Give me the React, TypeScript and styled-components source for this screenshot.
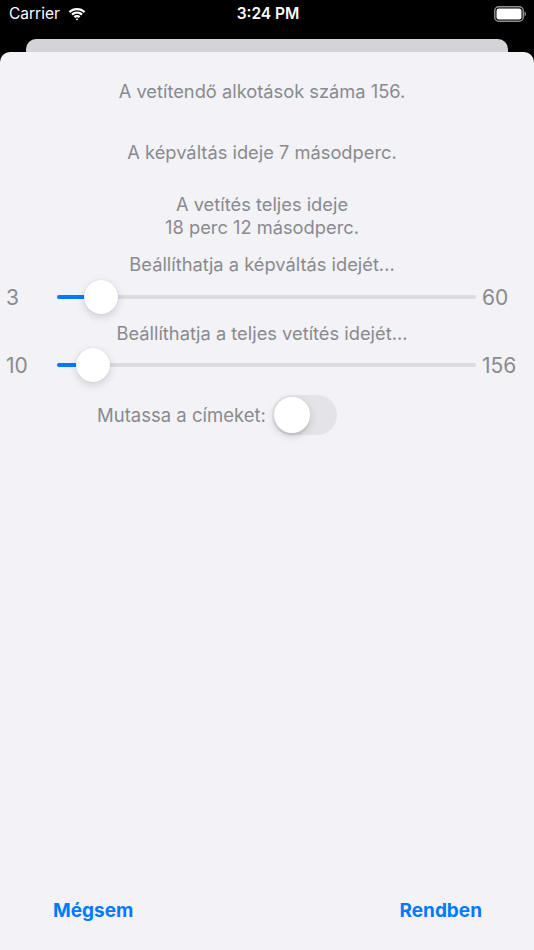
import React from "react";
import styled, { createGlobalStyle } from "styled-components";

const GlobalStyle = createGlobalStyle`
  html, body {
    margin: 0;
    padding: 0;
    background: #000000;
  }
  * {
    box-sizing: border-box;
  }
`;

const Screen = styled.div`
  width: 534px;
  height: 950px;
  display: flex;
  flex-direction: column;
  background: #000000;
  font-family: "Inter", "Liberation Sans", sans-serif;
  overflow: hidden;
`;

const StatusBar = styled.div`
  height: 39px;
  display: grid;
  grid-template-columns: 1fr auto 1fr;
  align-items: start;
  padding: 4px 7px 0 9px;
  color: #ffffff;
`;

const Carrier = styled.div`
  display: flex;
  align-items: center;
  gap: 7px;
  font-size: 15.5px;
  line-height: 19px;
`;

const Clock = styled.div`
  font-size: 15.5px;
  font-weight: 600;
  line-height: 19px;
`;

const BatteryWrap = styled.div`
  justify-self: end;
  display: flex;
  align-items: center;
  height: 19px;
`;

const BackCard = styled.div`
  height: 13px;
  margin: 0 26px;
  background: #d3d3d8;
  border-radius: 10px 10px 0 0;
`;

const Sheet = styled.div`
  flex: 1;
  display: flex;
  flex-direction: column;
  align-items: center;
  background: #f2f2f7;
  border-radius: 10px 10px 0 0;
  padding-top: 28px;
`;

const InfoText = styled.div<{ $gap: number }>`
  margin-top: ${(p) => p.$gap}px;
  width: 100%;
  padding-right: 10px;
  font-size: 18.3px;
  line-height: 23px;
  color: #8a8a8e;
  text-align: center;
`;

const SliderRow = styled.div<{ $gap: number }>`
  margin-top: ${(p) => p.$gap}px;
  width: 100%;
  height: 34px;
  display: grid;
  grid-template-columns: 57px 1fr 58px;
  align-items: center;
`;

const RangeLabel = styled.span`
  padding-left: 6px;
  font-size: 21px;
  color: #8a8a8e;
`;

const Track = styled.div`
  position: relative;
  height: 4px;
  border-radius: 2px;
  background: #dcdce0;
`;

const Fill = styled.div`
  position: absolute;
  left: 0;
  top: 0;
  bottom: 0;
  border-radius: 2px;
  background: #007aff;
`;

const Thumb = styled.div`
  position: absolute;
  top: 50%;
  width: 34px;
  height: 34px;
  margin: -17px 0 0 -17px;
  border-radius: 50%;
  background: #ffffff;
  box-shadow: 0 3px 8px rgba(0, 0, 0, 0.15), 0 0 1px rgba(0, 0, 0, 0.16);
`;

const ToggleRow = styled.div`
  margin-top: 13px;
  align-self: flex-start;
  margin-left: 97px;
  display: flex;
  align-items: center;
  gap: 6px;
`;

const ToggleLabel = styled.span`
  font-size: 18.5px;
  color: #8a8a8e;
`;

const Switch = styled.div`
  position: relative;
  width: 65px;
  height: 40px;
  border-radius: 20px;
  background: #e4e4e8;
`;

const SwitchKnob = styled.div`
  position: absolute;
  left: 2px;
  top: 2px;
  width: 36px;
  height: 36px;
  border-radius: 50%;
  background: #ffffff;
  box-shadow: 0 3px 8px rgba(0, 0, 0, 0.15), 0 3px 1px rgba(0, 0, 0, 0.06);
`;

const Spacer = styled.div`
  flex: 1;
`;

const ButtonBar = styled.div`
  width: 100%;
  display: flex;
  justify-content: space-between;
  padding: 0 52px 27px 53px;
`;

const ActionButton = styled.button`
  border: none;
  background: none;
  padding: 0;
  font-family: inherit;
  font-size: 19px;
  font-weight: 700;
  line-height: 24px;
  color: #007aff;
`;

const Wifi = () => (
  <svg width="20" height="14" viewBox="0 0 19 14">
    <path d="M9.5 3.2c2.6 0 5 1 6.8 2.7l1.5-1.6C15.6 2.2 12.7 1 9.5 1S3.4 2.2 1.2 4.3l1.5 1.6C4.5 4.2 6.9 3.2 9.5 3.2z" fill="#fff" />
    <path d="M9.5 6.8c1.6 0 3 .6 4.2 1.6l1.5-1.6C13.7 5.4 11.7 4.6 9.5 4.6S5.3 5.4 3.8 6.8l1.5 1.6c1.2-1 2.6-1.6 4.2-1.6z" fill="#fff" />
    <path d="M9.5 10.2c.7 0 1.3.2 1.8.7l1.6-1.6c-.9-.8-2.1-1.3-3.4-1.3s-2.5.5-3.4 1.3l1.6 1.6c.5-.5 1.1-.7 1.8-.7z" fill="#fff" />
    <path d="M9.5 13.6l1.4-1.5c-.4-.3-.9-.5-1.4-.5s-1 .2-1.4.5z" fill="#fff" />
  </svg>
);

const Battery = () => (
  <svg width="33" height="16" viewBox="0 0 33 16">
    <rect x="0.75" y="0.75" width="28.5" height="14.5" rx="4" fill="none" stroke="#8e8e93" strokeWidth="1.5" />
    <rect x="2.5" y="2.5" width="25" height="11" rx="2.3" fill="#ffffff" />
    <path d="M30.5 5.5v5c.9-.3 1.5-1.3 1.5-2.5s-.6-2.2-1.5-2.5z" fill="#8e8e93" />
  </svg>
);

const Slider: React.FC<{ min: number; max: number; fraction: number; gap: number }> = ({
  min,
  max,
  fraction,
  gap,
}) => {
  const pos = `calc(17px + (100% - 34px) * ${fraction})`;
  return (
    <SliderRow $gap={gap}>
      <RangeLabel>{min}</RangeLabel>
      <Track>
        <Fill style={{ width: pos }} />
        <Thumb style={{ left: pos }} />
      </Track>
      <RangeLabel>{max}</RangeLabel>
    </SliderRow>
  );
};

const App: React.FC = () => {
  return (
    <>
      <GlobalStyle />
      <Screen>
        <StatusBar>
          <Carrier>
            Carrier <Wifi />
          </Carrier>
          <Clock>3:24 PM</Clock>
          <BatteryWrap>
            <Battery />
          </BatteryWrap>
        </StatusBar>
        <BackCard />
        <Sheet>
          <InfoText $gap={0}>A vetítendő alkotások száma 156.</InfoText>
          <InfoText $gap={38}>A képváltás ideje 7 másodperc.</InfoText>
          <InfoText $gap={29}>
            A vetítés teljes ideje
            <br />
            18 perc 12 másodperc.
          </InfoText>
          <InfoText $gap={14}>Beállíthatja a képváltás idejét...</InfoText>
          <Slider min={3} max={60} fraction={(7 - 3) / 57} gap={4} />
          <InfoText $gap={8}>Beállíthatja a teljes vetítés idejét...</InfoText>
          <Slider min={10} max={156} fraction={0.05} gap={3} />
          <ToggleRow>
            <ToggleLabel>Mutassa a címeket:</ToggleLabel>
            <Switch>
              <SwitchKnob />
            </Switch>
          </ToggleRow>
          <Spacer />
          <ButtonBar>
            <ActionButton>Mégsem</ActionButton>
            <ActionButton>Rendben</ActionButton>
          </ButtonBar>
        </Sheet>
      </Screen>
    </>
  );
};

export default App;
